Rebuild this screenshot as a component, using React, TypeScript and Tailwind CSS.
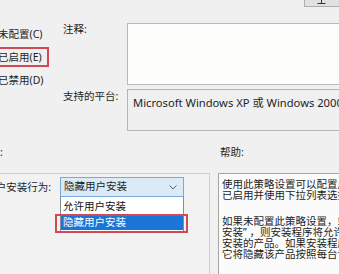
export default function App() {
  return (
    <div className="w-[339px] h-[274px] overflow-hidden bg-[#f0f0f0] text-[10.5px] text-[#1e1e1e] font-['Noto_Sans','Noto_Sans_CJK_SC',sans-serif] whitespace-nowrap">
      <div className="w-[440px] -ml-[30px]">
        {/* clipped button at the top edge */}
        <div className="h-[23px] pl-[334px]">
          <div className="w-[37px] h-[7px] bg-[#e1e1e1] border border-t-0 border-[#adadad] flex justify-center">
            <svg width="9" height="4" viewBox="0 0 9 4" className="-ml-[2px]">
              <path d="M4.5 0 V3.5 M0.5 3.5 H8.5" stroke="#333" strokeWidth="1" fill="none" />
            </svg>
          </div>
        </div>

        {/* state / comment / platform */}
        <div className="flex">
          <div className="w-[93px] shrink-0 pl-[28px] -mt-[1px] flex flex-col leading-[14px]">
            <div className="h-[23px] flex items-center">未配置(C)</div>
            <div className="h-[23px] flex items-center">
              <span className="-ml-[5px] h-[20px] pl-[3px] pr-[5px] flex items-center border-2 border-[#cf4a55]">已启用(E)</span>
            </div>
            <div className="h-[23px] flex items-center">已禁用(D)</div>
          </div>
          <div className="flex-1 min-w-0 grid grid-cols-[64px_1fr] gap-y-[4px] leading-[14px]">
            <div className="-mt-[1px]">注释:</div>
            <div className="h-[62px] bg-[#fdfdfb] border border-[#b9b9b9]" />
            <div>支持的平台:</div>
            <div className="h-[42px] border border-[#b4b4b4] pl-[5px] pt-[6px] text-[11.2px] overflow-hidden">
              Microsoft Windows XP 或 Windows 2000 SP1 及以上版本
            </div>
          </div>
        </div>

        {/* section labels */}
        <div className="flex mt-[14px] leading-[14px]">
          <div className="w-[250px] shrink-0 pl-[9px]">选项:</div>
          <div>帮助:</div>
        </div>

        {/* options and help panels */}
        <div className="flex gap-[8px] mt-[14px]">
          <div className="w-[240px] shrink-0 h-[120px] border border-[#cfcfcf] bg-[#f2f2f2] pt-[3px] pl-[9px]">
            <div className="grid grid-cols-[80px_124px] items-center">
              <div className="text-right pr-[9px] leading-[14px]">用户安装行为:</div>
              <div className="relative">
                <div className="h-[20px] bg-[#dbeaf7] border border-[#7aa9d8] flex items-center justify-between pl-[3px] pr-[6px]">
                  <span>隐藏用户安装</span>
                  <svg width="8" height="5" viewBox="0 0 8 5">
                    <path d="M0.5 0.5 L4 4 L7.5 0.5" stroke="#5a6b7d" strokeWidth="1" fill="none" />
                  </svg>
                </div>
                <div className="absolute top-full left-0 w-full bg-white border border-t-0 border-[#8a8a8a] pb-[1px]">
                  <div className="h-[19px] flex items-center pl-[2px] text-[#111]">允许用户安装</div>
                  <div className="relative h-[14px] flex items-center pl-[2px] bg-[#1c74d6] text-white">
                    隐藏用户安装
                    <div className="absolute -left-[6px] -right-[5px] -top-[2px] -bottom-[3px] border-2 border-[#cf4a55]" />
                  </div>
                </div>
              </div>
            </div>
          </div>
          <div className="flex-1 min-w-0 h-[120px] overflow-hidden bg-[#fbfbfb] border border-[#a5a5a5] pl-[3px] pt-[5px] leading-[11.3px]">
            <div>使用此策略设置可以配置用户安装。若要配置此策略设置，</div>
            <div>已启用并使用下拉列表选择要使用的行为。</div>
            <div className="mt-[14px]">如果未配置此策略设置，或者将其设置为“已启用”</div>
            <div>安装” ，则安装程序将允许和使用每用户安装的产品</div>
            <div>安装的产品。如果安装程序发现每用户安装的产品</div>
            <div>它将隐藏该产品按照每台计算机安装该产品。</div>
          </div>
        </div>
      </div>
    </div>
  )
}
